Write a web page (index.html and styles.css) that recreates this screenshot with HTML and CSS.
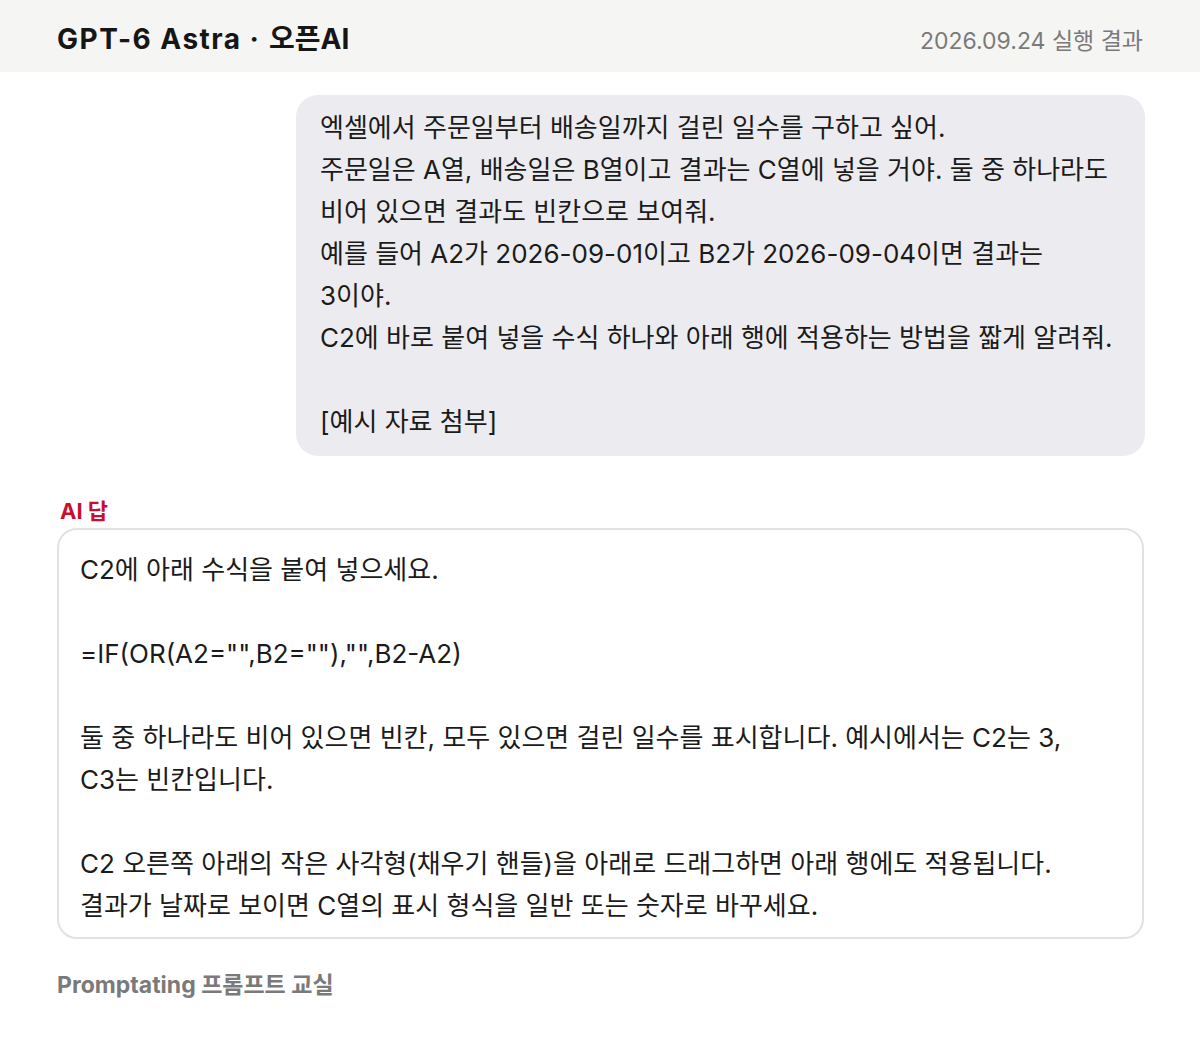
FILE: index.html
```html
<!DOCTYPE html>
<html lang="ko">
<head>
<meta charset="utf-8">
<title>GPT-6 Astra · 오픈AI</title>
<link rel="stylesheet" href="styles.css">
</head>
<body>
<header class="topbar">
  <div class="title"><span class="model">GPT-6 Astra</span><span class="sep">·</span><span class="org">오픈AI</span></div>
  <div class="date">2026.09.24 실행 결과</div>
</header>
<main class="content">
  <div class="user-row">
    <div class="bubble">엑셀에서 주문일부터 배송일까지 걸린 일수를 구하고 싶어.
주문일은 A열, 배송일은 B열이고 결과는 C열에 넣을 거야. 둘 중 하나라도 비어 있으면 결과도 빈칸으로 보여줘.
예를 들어 A2가 2026-09-01이고 B2가 2026-09-04이면 결과는 3이야.
C2에 바로 붙여 넣을 수식 하나와 아래 행에 적용하는 방법을 짧게 알려줘.

[예시 자료 첨부]</div>
  </div>
  <div class="ai-label">AI 답</div>
  <div class="answer">C2에 아래 수식을 붙여 넣으세요.

=IF(OR(A2="",B2=""),"",B2-A2)

둘 중 하나라도 비어 있으면 빈칸, 모두 있으면 걸린 일수를 표시합니다. 예시에서는 C2는 3, C3는 빈칸입니다.

C2 오른쪽 아래의 작은 사각형(채우기 핸들)을 아래로 드래그하면 아래 행에도 적용됩니다.
결과가 날짜로 보이면 C열의 표시 형식을 일반 또는 숫자로 바꾸세요.</div>
  <div class="footer">Promptating 프롬프트 교실</div>
</main>
</body>
</html>
```

FILE: styles.css
```css
* { box-sizing: border-box; }
html, body { margin: 0; padding: 0; background: #ffffff; }
body {
  font-family: Inter, "Noto Sans CJK KR", sans-serif;
  color: #1b1b1b;
}
.topbar {
  height: 72px;
  background: #f5f5f4;
  display: flex;
  align-items: baseline;
  justify-content: space-between;
  padding: 22px 57px 0;
}
.title {
  font-size: 28px;
  line-height: 34px;
  font-weight: 700;
  color: #161616;
  display: flex;
  align-items: baseline;
}
.model {
  letter-spacing: 1.5px;
}
.sep {
  margin: 0 10px 0 8px;
}
.org {
  letter-spacing: 0;
}
.date {
  font-size: 23px;
  color: #7a7a7a;
}
.content {
  padding: 23px 55px 0 57px;
  display: flex;
  flex-direction: column;
}
.user-row {
  display: flex;
  justify-content: flex-end;
}
.bubble {
  width: 849px;
  background: #ececf0;
  border-radius: 22px;
  padding: 12px 24px 13px;
  font-size: 26px;
  line-height: 42px;
  white-space: pre-wrap;
  word-break: keep-all;
}
.ai-label {
  margin-top: 40px;
  padding-left: 3px;
  font-size: 22px;
  line-height: 30px;
  font-weight: 700;
  color: #c8102e;
}
.answer {
  margin-top: 2px;
  margin-right: 1px;
  border: 2px solid #e2e2e2;
  border-radius: 20px;
  padding: 19px 21px 10px;
  font-size: 26px;
  line-height: 42px;
  white-space: pre-wrap;
  word-break: keep-all;
}
.footer {
  margin-top: 31px;
  font-size: 23px;
  line-height: 30px;
  font-weight: 700;
  color: #7a7a7a;
}
```
